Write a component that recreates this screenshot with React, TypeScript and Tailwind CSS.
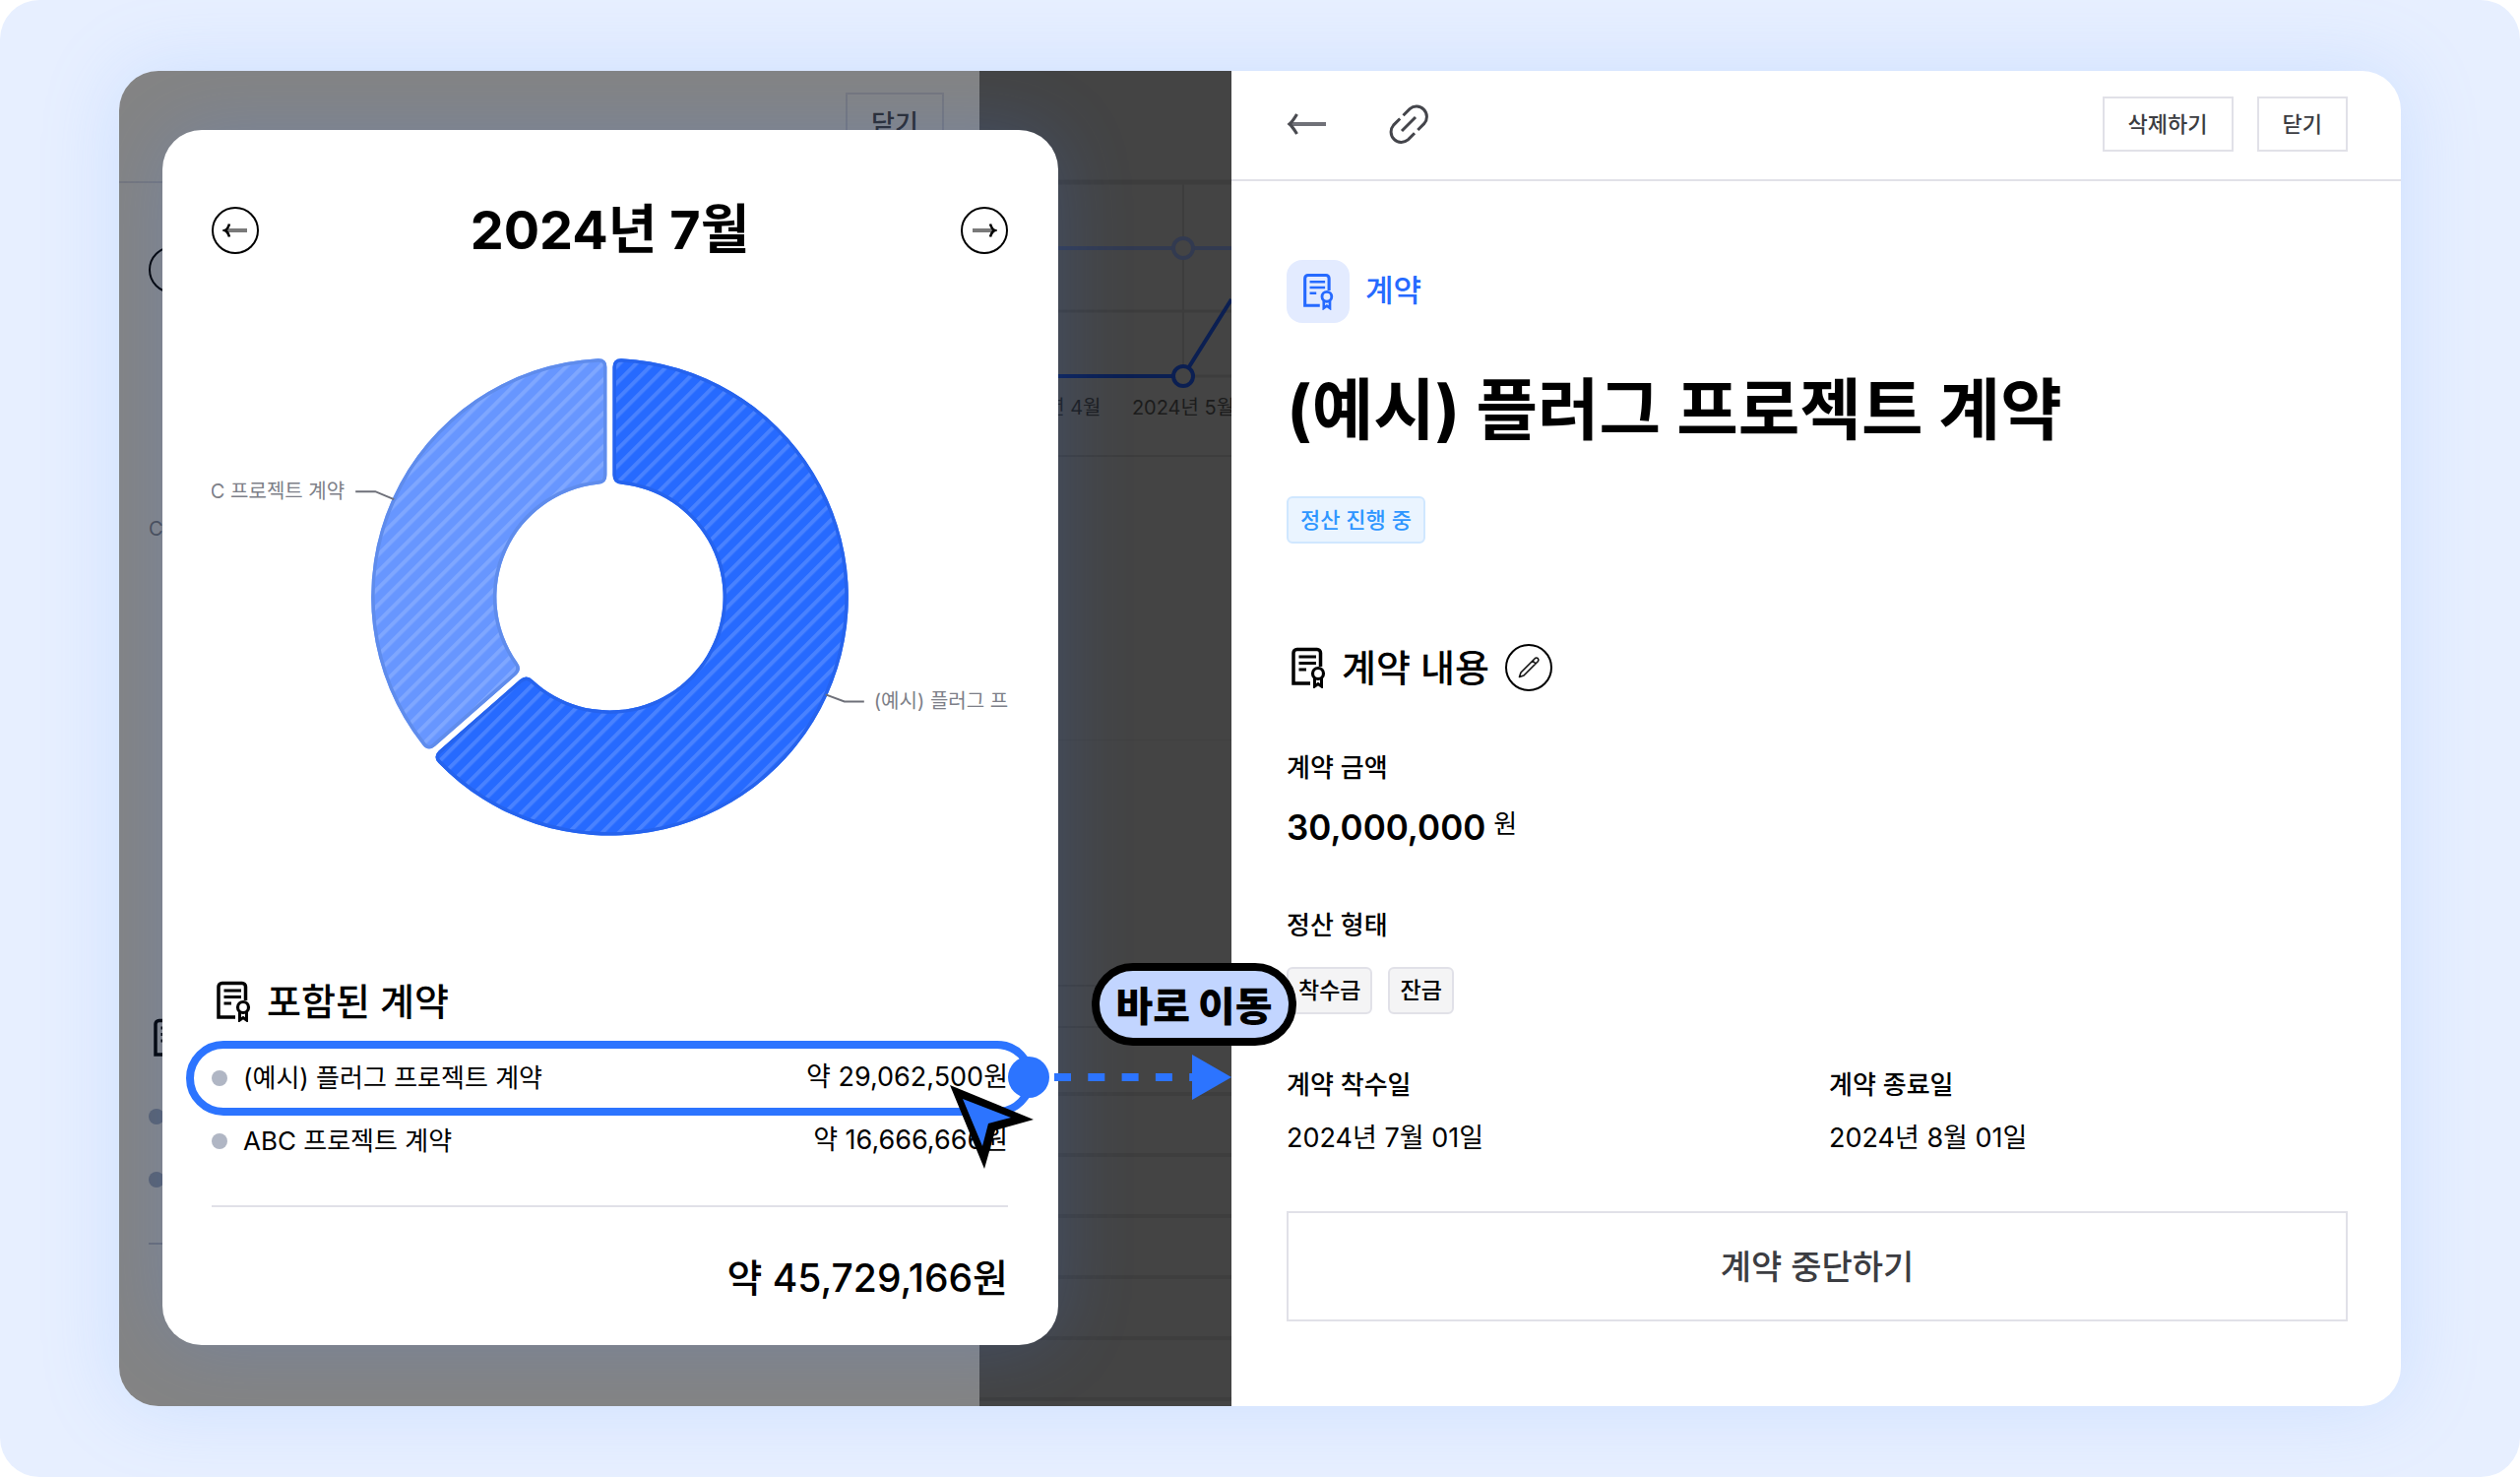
import React from "react";

function ContractIcon({ className }: { className?: string }) {
  return (
    <svg viewBox="0 0 36 42" fill="none" stroke="currentColor" strokeWidth="3.500" className={className} aria-hidden="true">
      <path d="M20 37H3V6a3.500 3.500 0 0 1 3.500-3.500H27A3.500 3.500 0 0 1 30.500 6V20" />
      <path d="M8.500 10H26M8.500 16.500H26M8.500 23H16" strokeWidth="3" />
      <circle cx="28" cy="27" r="5.500" strokeWidth="3.200" />
      <path d="M24.500 32V40L28 37.500L31.500 40V32" strokeWidth="3" />
    </svg>
  );
}

function ArrowCircle({ dir, label }: { dir: "left" | "right"; label: string }) {
  return (
    <button type="button" aria-label={label} className="flex size-12 items-center justify-center rounded-full border-2 border-black">
      <svg viewBox="0 0 26 20" fill="none" className={dir === "left" ? "h-5 w-[26px]" : "h-5 w-[26px] rotate-180"} aria-hidden="true">
        <path d="M3 10H25" stroke="#7a7a7a" strokeWidth="4" />
        <path d="M7 3.500C6 7 5 9 2.500 10C5 11 6 13 7 16.500" stroke="#000" strokeWidth="2.600" />
      </svg>
    </button>
  );
}

const CX = 404;
const CY = 250;
const OUT = 242;
const INN = 115;

function point(r: number, a: number): [number, number] {
  return [CX + r * Math.sin(a), CY - r * Math.cos(a)];
}

/* Ring slice with a constant-width gap and softened corners. */
function slice(from: number, to: number, gap: number, corner: number) {
  const at = (r: number, edge: "s" | "e", extra: number) => {
    const shift = Math.asin(gap / r) + extra / r;
    return point(r, edge === "s" ? from + shift : to - shift).join(" ");
  };
  const large = to - from > Math.PI ? 1 : 0;
  return [
    `M${at(OUT, "s", corner)}`,
    `A${OUT} ${OUT} 0 ${large} 1 ${at(OUT, "e", corner)}`,
    `Q${at(OUT, "e", 0)} ${at(OUT - corner, "e", 0)}`,
    `L${at(INN + corner, "e", 0)}`,
    `Q${at(INN, "e", 0)} ${at(INN, "e", corner)}`,
    `A${INN} ${INN} 0 ${large} 0 ${at(INN, "s", corner)}`,
    `Q${at(INN, "s", 0)} ${at(INN + corner, "s", 0)}`,
    `L${at(OUT - corner, "s", 0)}`,
    `Q${at(OUT, "s", 0)} ${at(OUT, "s", corner)}Z`,
  ].join("");
}

function Donut() {
  const full = Math.PI * 2;
  const split = full * (29062500 / 45729166);
  const big = slice(0, split, 3, 9);
  const small = slice(split, full, 3, 9);
  return (
    <svg viewBox="0 0 808 500" className="mt-[98px] w-full overflow-hidden" role="img" aria-label="2024년 7월 계약 비율">
      <defs>
        <pattern id="hatch" width="12" height="12" patternUnits="userSpaceOnUse" patternTransform="rotate(45)">
          <rect width="4" height="12" fill="#fff" fillOpacity="0.16" />
        </pattern>
        <clipPath id="clipBig"><path d={big} /></clipPath>
        <clipPath id="clipSmall"><path d={small} /></clipPath>
      </defs>
      <path d={big} fill="#266aff" />
      <path d={big} fill="url(#hatch)" />
      <path d={big} fill="none" stroke="#2563ee" strokeWidth="7" clipPath="url(#clipBig)" />
      <path d={small} fill="#6796ff" />
      <path d={small} fill="url(#hatch)" />
      <path d={small} fill="none" stroke="#5f8cec" strokeWidth="7" clipPath="url(#clipSmall)" />
      <g fill="none" stroke="#6e7079" strokeWidth="2">
        <path d="M146 143H166L185 151" />
        <path d="M623 349L642 356H662" />
      </g>
      <g fill="#7d7f88" fontSize="20">
        <text x="135" y="150" textAnchor="end">ABC 프로젝트 계약</text>
        <text x="672" y="363">(예시) 플러그 프로젝트 계약</text>
      </g>
    </svg>
  );
}

const contracts = [
  { name: "(예시) 플러그 프로젝트 계약", amount: "약 29,062,500원" },
  { name: "ABC 프로젝트 계약", amount: "약 16,666,666원" },
];

function MonthDialog() {
  return (
    <div className="absolute top-15 right-44 left-11 h-[1234px] rounded-[40px] bg-white pr-[51px] pl-[50px] shadow-[0_0_80px_rgba(64,128,255,0.2)]">
      <div className="mt-[78px] flex h-12 items-center justify-between">
        <ArrowCircle dir="left" label="이전 달" />
        <h2 className="text-[54px] leading-none font-bold">2024년 7월</h2>
        <ArrowCircle dir="right" label="다음 달" />
      </div>
      <div className="mt-6">
        <Donut />
      </div>
      <div className="mt-[136px] flex h-12 items-center gap-4">
        <ContractIcon className="ml-1 h-[42px] w-9" />
        <h3 className="text-[38px] leading-none font-medium">포함된 계약</h3>
      </div>
      <ul className="relative mt-[22px]">
        {contracts.map((c) => (
          <li key={c.name} className="flex h-16 items-center text-[26px]">
            <span className="mr-4 size-4 rounded-full bg-[#b0b6c4]" />
            <span className="flex-1">{c.name}</span>
            <span className="text-[27px]">{c.amount}</span>
          </li>
        ))}
        <li aria-hidden="true" className="absolute -top-[6px] -right-[27px] -left-[26px] h-[76px] rounded-full border-8 border-[#2c74ff]" />
      </ul>
      <hr className="mt-[33px] border-t-2 border-[#e1e1e8]" />
      <p className="mt-12 text-right text-[39px] leading-[48px] font-medium">약 45,729,166원</p>
    </div>
  );
}

function BackdropPanel() {
  return (
    <div aria-hidden="true" className="w-[874px] flex-none bg-[#848484]">
      <div className="flex h-[114px] justify-end border-b-2 border-[#75767c] pt-[22px] pr-9">
        <div className="h-14 w-[100px] border-2 border-[#75767c] pt-3 text-center text-[26px] leading-9 font-medium text-[#2a2b2e]">닫기</div>
      </div>
      <div className="ml-[30px] flex w-12 flex-col">
        <div className="mt-16 size-12 rounded-full border-2 border-black" />
        <div className="mt-[223px] h-8 text-[20px] leading-8 text-[#4a4c52]">C</div>
        <ContractIcon className="mt-[481px] ml-1 h-[42px] w-9" />
        <div className="mt-[50px] size-4 rounded-full bg-[#5a616e]" />
        <div className="mt-12 size-4 rounded-full bg-[#5a616e]" />
        <div className="mt-14 h-[2px] bg-[#6a6c74]" />
      </div>
    </div>
  );
}

function BackdropChart() {
  return (
    <div aria-hidden="true" className="relative min-w-0 flex-1 overflow-hidden bg-[#444]">
      <svg viewBox="0 0 256 400" className="h-[400px] w-[256px]" fill="none">
        <g stroke="#3d3d3d">
          <path d="M0 113H256" strokeWidth="5" />
          <path d="M207 113V310" strokeWidth="2" />
          <path d="M0 244H256" strokeWidth="3" />
          <path d="M0 310H256" strokeWidth="3" />
          <path d="M0 391H256" strokeWidth="2" />
        </g>
        <path d="M0 180H256" stroke="#323a50" strokeWidth="4" />
        <path d="M0 310H207L256 232" stroke="#0b1f52" strokeWidth="4" />
        <circle cx="207" cy="180" r="10" fill="#444" stroke="#323a50" strokeWidth="4" />
        <circle cx="207" cy="310" r="10" fill="#444" stroke="#0b1f52" strokeWidth="4" />
        <g fill="#1c1c1c" fontSize="20" textAnchor="middle">
          <text x="71" y="349">2024년 4월</text>
          <text x="207" y="349">2024년 5월</text>
        </g>
      </svg>
      <div className="h-[280px] border-b border-[#404040]" />
      <div className="h-[250px] border-b-2 border-[#3e3e3e]" />
      <div className="h-[42px] border-b-2 border-[#3e3e3e]" />
      <div className="h-[69px] border-b-4 border-[#3e3e3e]" />
      {[0, 1, 2, 3, 4].map((i) => (
        <div key={i} className="h-[62px] border-b-4 border-[#3e3e3e]" />
      ))}
    </div>
  );
}

function Pointer() {
  return (
    <>
      <svg viewBox="0 0 230 50" className="absolute top-[997px] left-[901px] h-[50px] w-[230px]" aria-hidden="true">
        <circle cx="23" cy="25" r="21" fill="#2c74ff" />
        <path d="M49 25H191" stroke="#2c74ff" strokeWidth="8" strokeDasharray="17 17.300" />
        <path d="M189 2L229 25L189 48Z" fill="#2c74ff" />
      </svg>
      <div className="absolute top-[906px] left-[988px] flex h-[84px] w-[208px] items-center justify-center rounded-full border-8 border-black bg-[#c2d5ff] pt-1 text-[41px] leading-none font-black whitespace-nowrap text-black">
        바로 이동
      </div>
      <svg viewBox="0 0 86 86" className="absolute top-[1030px] left-[844px] size-[86px]" aria-hidden="true">
        <path d="M0 0L85 35L46 46L35 85Z" fill="#000" />
        <path d="M13 14L62 33L39 39L33 62Z" fill="#2c74ff" />
      </svg>
    </>
  );
}

function Field({ label, children }: { label: string; children: React.ReactNode }) {
  return (
    <div>
      <dt className="text-[26px] leading-8 font-medium">{label}</dt>
      <dd>{children}</dd>
    </div>
  );
}

function ContractDetail() {
  return (
    <main className="flex min-w-0 flex-1 flex-col bg-white">
      <header className="flex h-28 items-center border-b-2 border-[#e1e1e8] pr-[54px] pb-[2px] pl-14">
        <button type="button" aria-label="뒤로">
          <svg viewBox="0 0 40 28" fill="none" className="h-7 w-10">
            <path d="M3 14H40" stroke="#707178" strokeWidth="4" />
            <path d="M10.500 4C8 8 6 11.500 3 14C6 16.500 8 20 10.500 24" stroke="#4a4b51" strokeWidth="3.200" />
          </svg>
        </button>
        <button type="button" aria-label="링크 복사" className="ml-16">
          <svg viewBox="0 0 40 40" fill="none" stroke="#44454b" strokeWidth="3" className="size-10">
            <path d="M14.500 11.200L21.100 4.600A10.500 10.500 0 0 1 35.900 19.400L29.300 26" />
            <path d="M11.200 14.500L4.600 21.100A10.500 10.500 0 0 0 19.400 35.900L26 29.300" />
            <path d="M13 27L27 13" />
          </svg>
        </button>
        <div className="ml-auto flex gap-6">
          <button type="button" className="h-14 border-2 border-[#e1e1e8] px-6 text-[22px] font-medium text-[#3c3d42]">삭제하기</button>
          <button type="button" className="h-14 border-2 border-[#e1e1e8] px-6 text-[22px] font-medium text-[#3c3d42]">닫기</button>
        </div>
      </header>
      <div className="pr-[54px] pl-14">
        <div className="mt-20 flex items-center gap-4">
          <span className="flex size-16 items-center justify-center rounded-2xl bg-[#e3ebff] text-[#266aff]">
            <ContractIcon className="h-[38px] w-8" />
          </span>
          <span className="pb-1 text-[31px] leading-none font-medium text-[#266aff]">계약</span>
        </div>
        <h1 className="mt-12 text-[68px] leading-[80px] font-bold">(예시) 플러그 프로젝트 계약</h1>
        <span className="mt-12 inline-flex h-12 items-center rounded-md border-2 border-[#d0e7ff] bg-[#eaf4ff] px-3 text-[22px] font-medium text-[#2e96ff]">
          정산 진행 중
        </span>
        <div className="mt-[102px] flex h-12 items-center">
          <ContractIcon className="ml-1 h-[42px] w-9" />
          <h2 className="ml-4 text-[38px] leading-none font-medium">계약 내용</h2>
          <button type="button" aria-label="수정" className="ml-4 flex size-12 items-center justify-center rounded-full border-2 border-black">
            <svg viewBox="0 0 24 24" fill="none" stroke="#111" strokeWidth="1.600" strokeLinejoin="round" className="size-6">
              <path d="M2.500 21.500L4 17L18.500 2.500Q20 1.500 21.300 2.700Q22.500 4 21.500 5.500L7 20ZM16 5L19 8" />
            </svg>
          </button>
        </div>
        <dl>
          <div className="mt-[62px]">
            <Field label="계약 금액">
              <div className="mt-5 flex h-12 items-center gap-2 text-[35px] font-semibold">
                30,000,000 <span className="pb-2 text-[26px] font-normal">원</span>
              </div>
            </Field>
          </div>
          <div className="mt-[60px]">
            <Field label="정산 형태">
              <div className="mt-[26px] flex gap-4 text-[23px] font-medium">
                <span className="flex h-12 items-center rounded-md border-2 border-[#e1e1e8] bg-[#f4f4f5] px-[10px]">착수금</span>
                <span className="flex h-12 items-center rounded-md border-2 border-[#e1e1e8] bg-[#f4f4f5] px-[10px]">잔금</span>
              </div>
            </Field>
          </div>
          <div className="mt-14 grid grid-cols-2 gap-6">
            <Field label="계약 착수일">
              <div className="mt-[22px] text-[27px] leading-8">2024년 7월 01일</div>
            </Field>
            <Field label="계약 종료일">
              <div className="mt-[22px] text-[27px] leading-8">2024년 8월 01일</div>
            </Field>
          </div>
        </dl>
        <button type="button" className="mt-[58px] h-28 w-full border-2 border-[#e1e1e8] text-[34px] font-medium text-[#3c3d42]">계약 중단하기</button>
      </div>
    </main>
  );
}

export default function App() {
  return (
    <div className="bg-white font-[Inter,'Noto_Sans_CJK_KR',sans-serif] text-black">
      <div className="flex min-h-screen rounded-[40px] bg-[#e7efff] px-[121px] py-[72px]">
        <div className="relative flex flex-1 rounded-[40px] shadow-[0_0_80px_rgba(120,175,255,0.24)]">
          <div className="flex flex-1 overflow-hidden rounded-[40px]">
            <div className="relative flex w-[1130px] flex-none overflow-hidden">
              <BackdropPanel />
              <BackdropChart />
              <MonthDialog />
            </div>
            <ContractDetail />
          </div>
          <Pointer />
        </div>
      </div>
    </div>
  );
}
